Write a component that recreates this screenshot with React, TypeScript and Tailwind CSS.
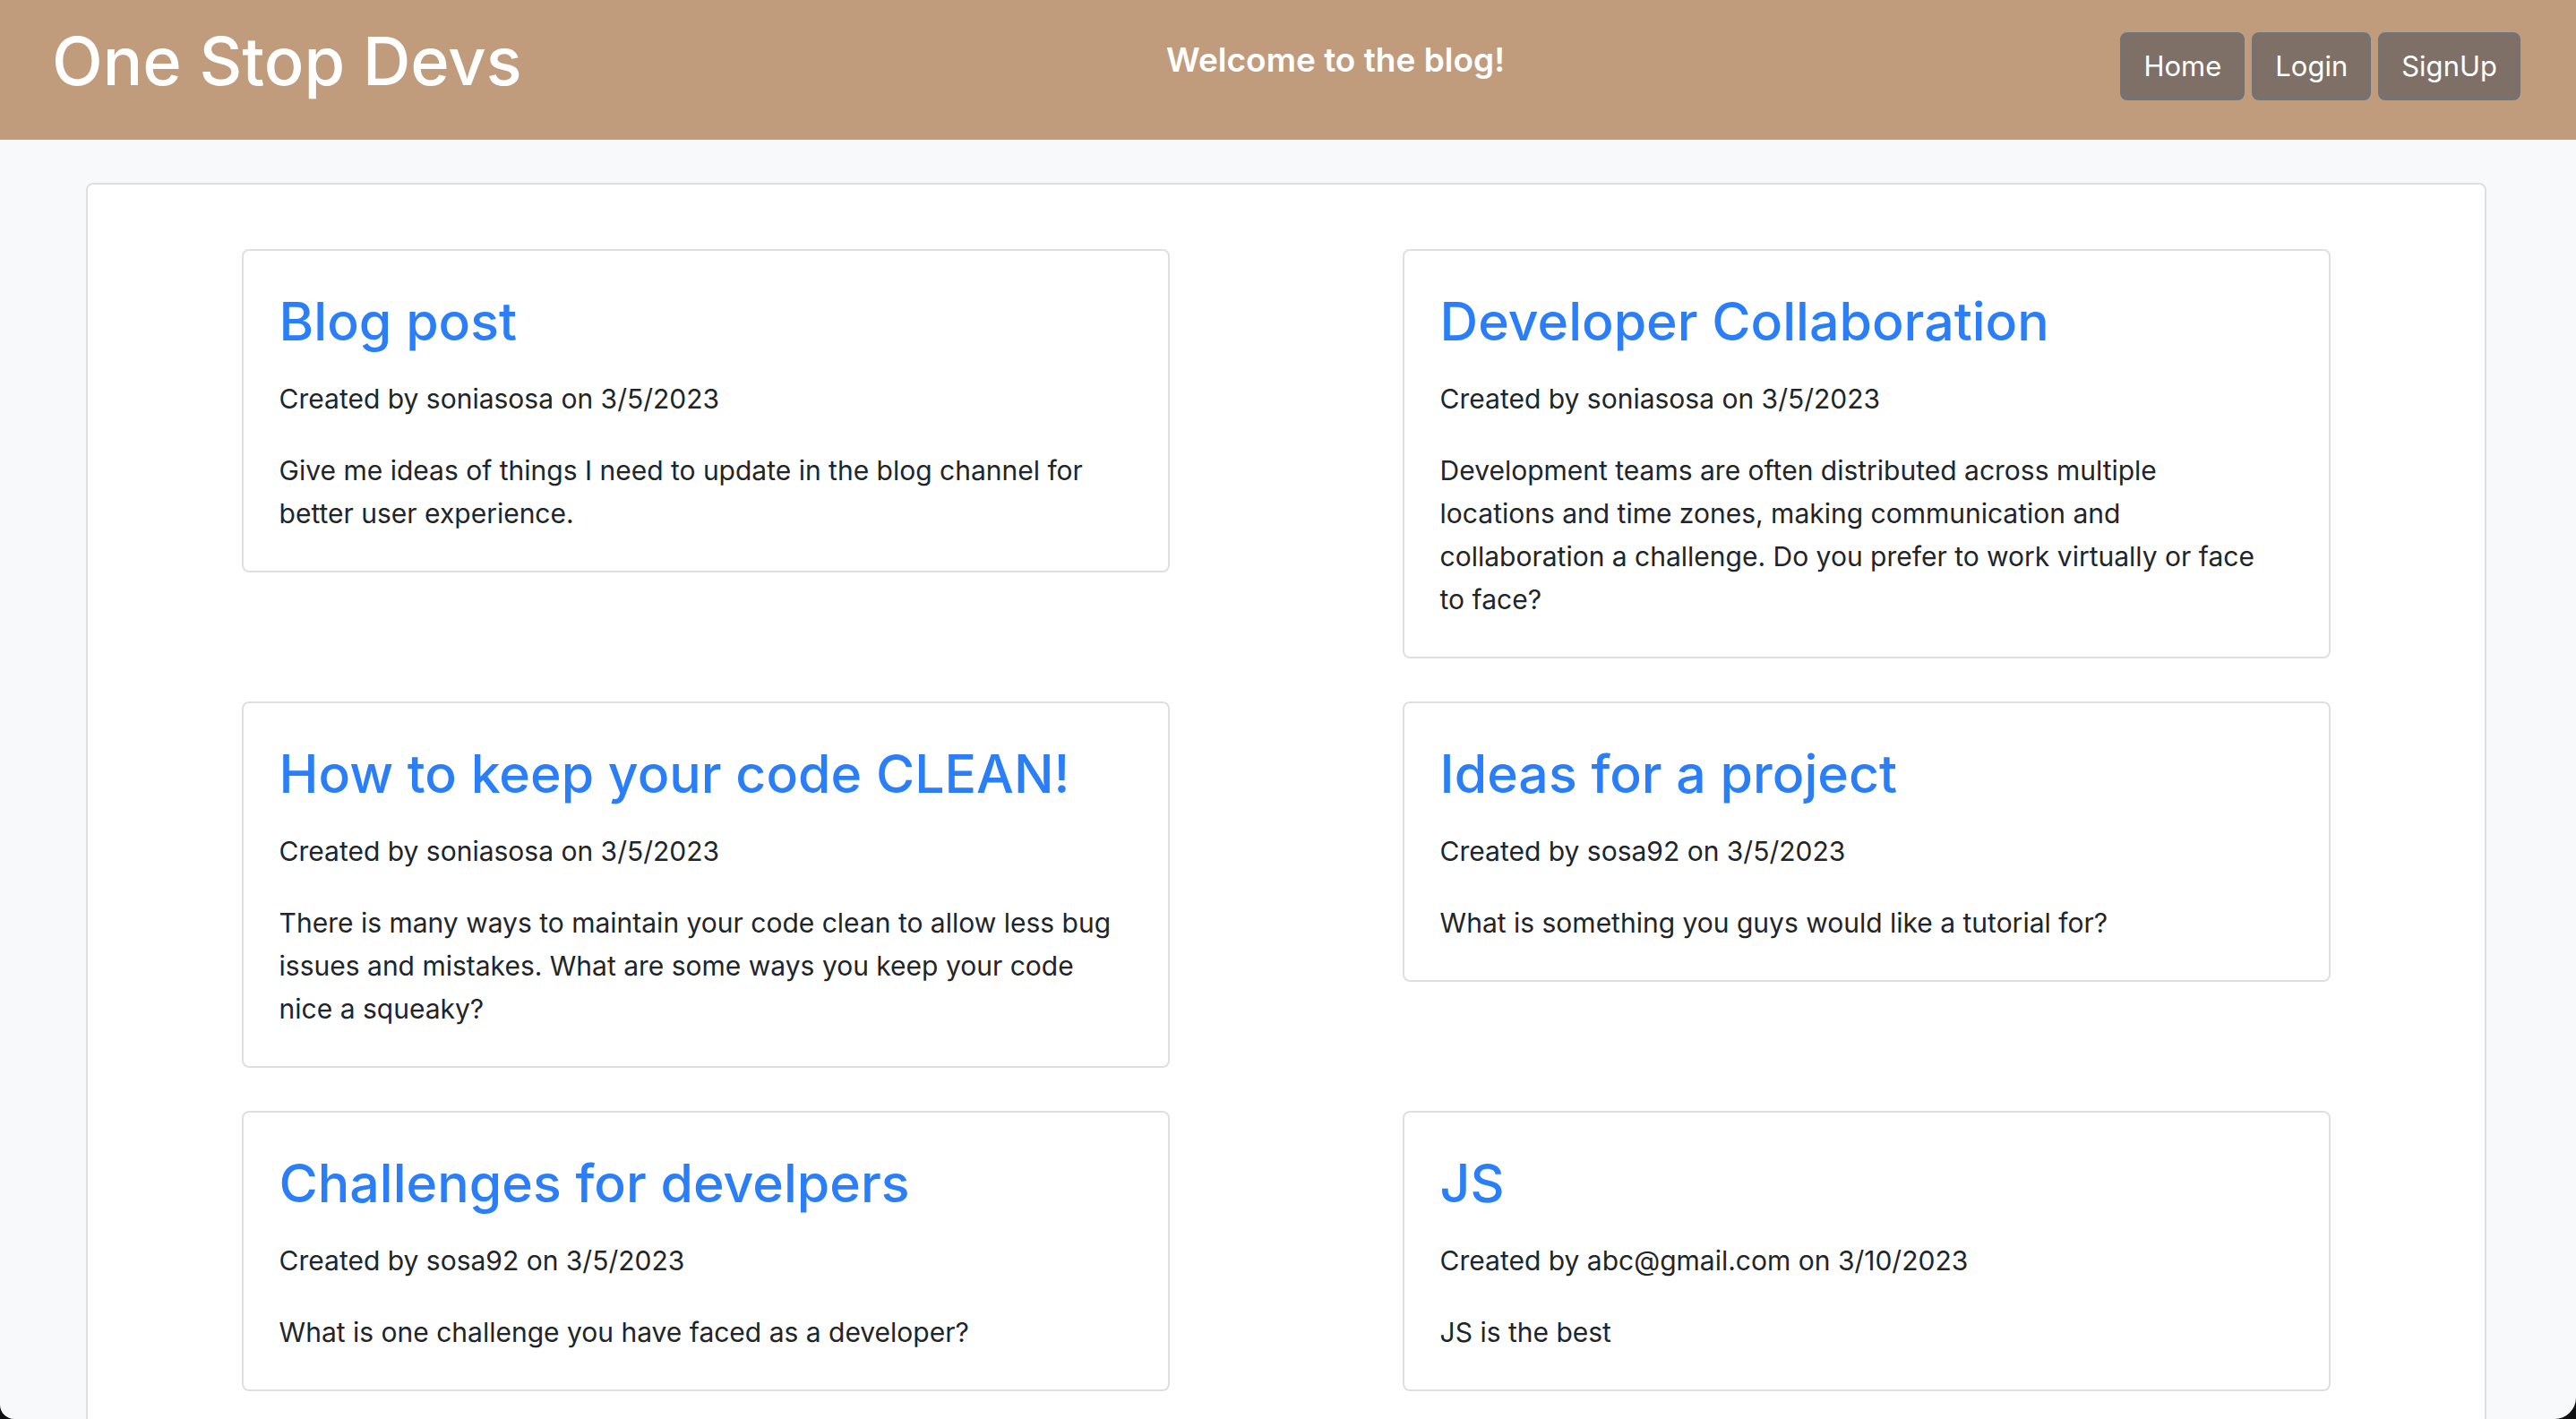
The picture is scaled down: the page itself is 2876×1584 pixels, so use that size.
type Post = { title: string; author: string; date: string; body: string };

const posts: Post[] = [
  {
    title: "Blog post",
    author: "soniasosa",
    date: "3/5/2023",
    body: "Give me ideas of things I need to update in the blog channel for better user experience.",
  },
  {
    title: "Developer Collaboration",
    author: "soniasosa",
    date: "3/5/2023",
    body: "Development teams are often distributed across multiple locations and time zones, making communication and collaboration a challenge. Do you prefer to work virtually or face to face?",
  },
  {
    title: "How to keep your code CLEAN!",
    author: "soniasosa",
    date: "3/5/2023",
    body: "There is many ways to maintain your code clean to allow less bug issues and mistakes. What are some ways you keep your code nice a squeaky?",
  },
  {
    title: "Ideas for a project",
    author: "sosa92",
    date: "3/5/2023",
    body: "What is something you guys would like a tutorial for?",
  },
  {
    title: "Challenges for develpers",
    author: "sosa92",
    date: "3/5/2023",
    body: "What is one challenge you have faced as a developer?",
  },
  {
    title: "JS",
    author: "abc@gmail.com",
    date: "3/10/2023",
    body: "JS is the best",
  },
];

function NavButton({ label }: { label: string }) {
  return (
    <button
      type="button"
      className="rounded-lg border-2 border-[#6c757d] bg-[#7e7067] px-6 py-3 text-[31px] leading-[48px] text-white"
    >
      {label}
    </button>
  );
}

function PostCard({ post }: { post: Post }) {
  return (
    <article className="mb-12 w-2/5 rounded-lg border-2 border-[#dfdfdf] bg-white py-10 pr-15 pl-10">
      <h2 className="text-[59px] leading-[77px] font-medium">
        <a href="#post" className="text-[#2a7ef8]">
          {post.title}
        </a>
      </h2>
      <p className="mt-6">
        Created by {post.author} on {post.date}
      </p>
      <p className="mt-8">{post.body}</p>
    </article>
  );
}

export default function App() {
  return (
    <div className="h-screen bg-[#101112]">
      <div className="h-full overflow-hidden rounded-br-[24px] rounded-bl-[16px] bg-[#f8f9fb] font-['Inter',sans-serif] text-[30px] leading-[48px] text-[#212529]">
        <header className="flex h-39 items-start justify-between bg-[#c09c7d] pr-[62px] pl-[58px] text-white">
          <h1 className="pt-5 text-[74px] leading-[96px] font-medium">One Stop Devs</h1>
          <p className="ml-8 pt-[43px] text-[37px] leading-[48px] font-semibold">Welcome to the blog!</p>
          <nav className="flex gap-2 pt-9">
            <NavButton label="Home" />
            <NavButton label="Login" />
            <NavButton label="SignUp" />
          </nav>
        </header>
        <main className="pt-12 pr-25 pl-24">
          <section className="flex flex-wrap items-start justify-around rounded-t-lg border-2 border-[#dfdfdf] bg-white px-[42px] pt-18">
            {posts.map((post) => (
              <PostCard key={post.title} post={post} />
            ))}
          </section>
        </main>
      </div>
    </div>
  );
}
